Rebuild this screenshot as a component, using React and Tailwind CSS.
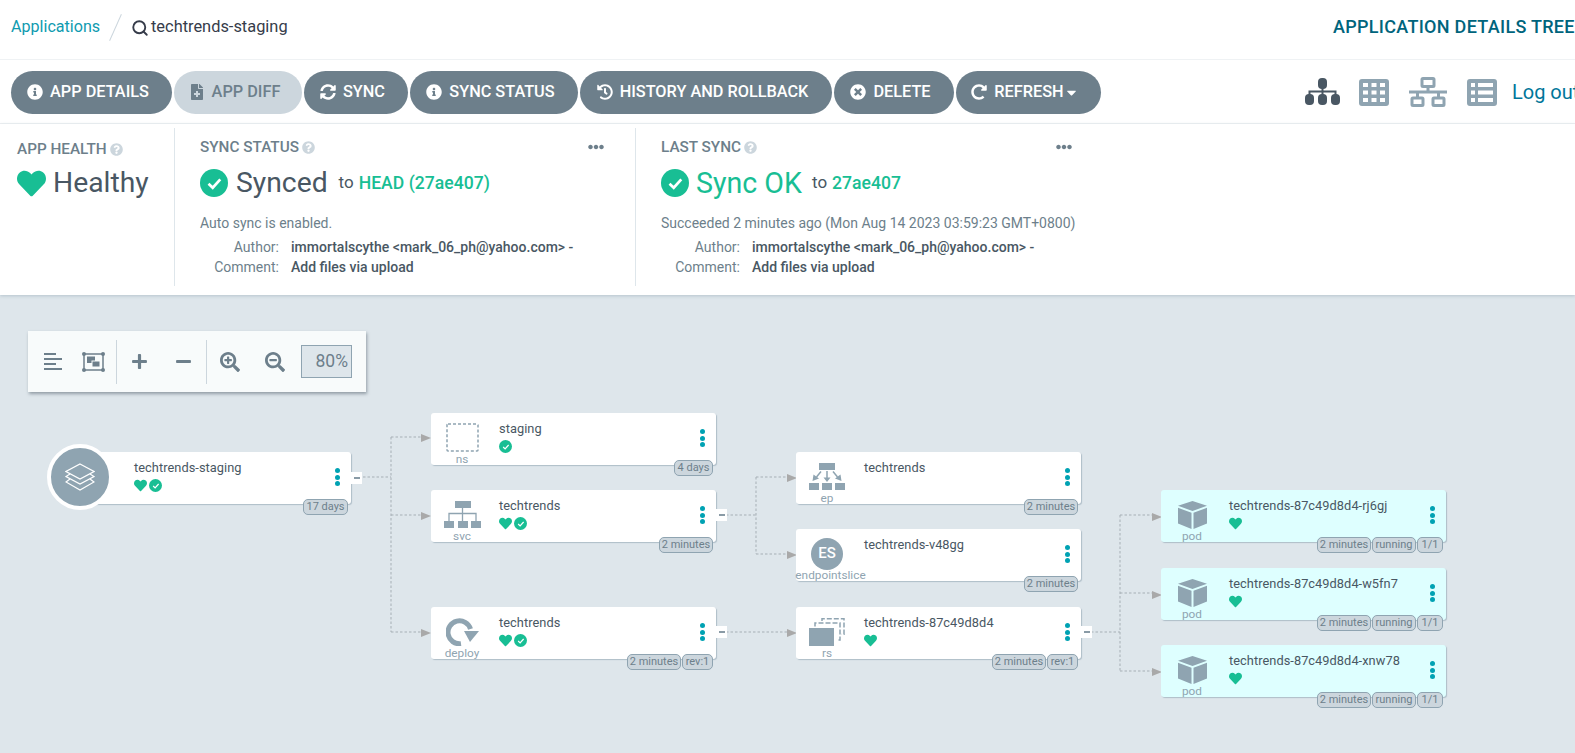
import React from "react";
import { FaInfoCircle, FaFileMedical, FaSyncAlt, FaHistory, FaTimesCircle, FaRedoAlt, FaCaretDown, FaHeart, FaQuestionCircle, FaEllipsisH, FaPlus, FaMinus, FaSearchPlus, FaSearchMinus } from "react-icons/fa";
import { Search } from "lucide-react";

const Btn = ({ icon: I, label, disabled, w, caret }) => (
  <div className={`${w} h-[43px] rounded-[22px] flex items-center justify-center gap-[7px] pr-[7px] text-[16.300px] font-medium whitespace-nowrap ${disabled ? "bg-[#ccd6dd] text-[#6d7f8b]" : "bg-[#6d7f8b] text-white"}`}>
    <I className="w-[16px] h-[16px] shrink-0" />
    <span className="flex items-center">{label}{caret && <FaCaretDown className="w-[15px] h-[15px]" />}</span>
  </div>
);

const Ok = ({ cls = "w-[13px] h-[13px]" }) => (
  <span className={`${cls} rounded-full bg-[#18be94] flex items-center justify-center shrink-0`}>
    <svg viewBox="0 0 10 10" className="w-[60%] h-[60%]"><path d="M1.5 5.2 L4 7.6 L8.5 2.6" fill="none" stroke="white" strokeWidth="1.6" /></svg>
  </span>
);

const Heart = ({ cls = "w-[13px] h-[13px]" }) => <FaHeart className={`${cls} text-[#18be94] shrink-0`} />;

const Meta = ({ w }) => (
  <div className="grid grid-cols-[auto_1fr] gap-x-[12px] text-[14px] leading-[20px] mt-[4px]">
    <span className={`${w} text-right text-[#6d7f8b]`}>Author:</span>
    <span className="font-medium text-[#495763] whitespace-nowrap">immortalscythe &lt;mark_06_ph@yahoo.com&gt; -</span>
    <span className={`${w} text-right text-[#6d7f8b]`}>Comment:</span>
    <span className="font-medium text-[#495763]">Add files via upload</span>
  </div>
);

const Title = ({ children }) => (
  <div className="flex items-center gap-[3px] text-[15.300px] font-medium text-[#6d7f8b] leading-[20px]">
    {children}
    <FaQuestionCircle className="w-[13px] h-[13px] text-[#ccd6dd]" />
  </div>
);

const C = "#8fa4b1";
const Svc = () => (
  <svg width="37" height="27" viewBox="0 0 37 27" fill={C}>
    <rect x="11" width="16" height="7" /><rect y="20" width="10" height="7" /><rect x="14" y="20" width="10" height="7" /><rect x="27" y="20" width="10" height="7" />
    <path d="M18.5 7v13M5 20v-7.500h27V20" fill="none" stroke={C} strokeWidth="1.300" />
  </svg>
);
const Ep = () => (
  <svg width="36" height="27" viewBox="0 0 36 27" fill={C}>
    <rect x="10" width="16" height="7" /><rect y="20" width="10" height="7" /><rect x="13" y="20" width="10" height="7" /><rect x="26" y="20" width="10" height="7" />
    <path d="M18 8v7M12 8.500 7.500 14M24 8.500 28.500 14" fill="none" stroke={C} strokeWidth="1.500" />
    <path d="M14.500 14.500h7L18 19zM4.500 11.500l5.500 4-6.500 2.500zM31.500 11.500l-5.500 4 6.500 2.500z" />
  </svg>
);
const Ns = () => (
  <svg width="33" height="29" viewBox="0 0 33 29"><rect x="1" y="1" width="31" height="27" rx="1" fill="none" stroke={C} strokeWidth="1.500" strokeDasharray="3 2" /></svg>
);
const Deploy = () => (
  <svg width="33" height="28" viewBox="0 0 33 28">
    <path d="M24.500 11A11.500 11.500 0 1 0 15 25.700" fill="none" stroke={C} strokeWidth="5" />
    <path d="M18 13h15l-9 11z" fill={C} />
  </svg>
);
const Rs = () => (
  <svg width="36" height="28" viewBox="0 0 36 28">
    <rect y="10" width="25" height="18" fill={C} />
    <path d="M6 8.500V5h25v17h-3M13 3V.8h22v15.500h-2.500" fill="none" stroke={C} strokeWidth="1.500" strokeDasharray="5 2" />
  </svg>
);
const Pod = () => (
  <svg width="29" height="28" viewBox="0 0 29 28" fill={C}>
    <path d="M14.500 0 29 4.800 14.500 10 0 4.800zM0 6.800l13.500 5V28L0 22.500zM29 6.800l-13.500 5V28L29 22.500z" />
  </svg>
);
const Es = () => (
  <span className="w-[32px] h-[32px] rounded-full bg-[#8fa4b1] text-white text-[15px] font-medium flex items-center justify-center">ES</span>
);

const Tag = ({ w, children }) => (
  <span className={`${w} h-[16px] rounded-[5px] border border-[#8fa4b1] bg-[#ccd6dd] text-[#6d7f8b] text-[11px] leading-[14px] text-center whitespace-nowrap`}>{children}</span>
);
const T2 = "w-[54px]";

const Node = ({ pos, name, kind, icon: I, heart, ok, tags, bg = "bg-white", labelCls = "" }) => (
  <div className={`absolute ${pos} w-[285px] h-[52px] rounded-[3px] ${bg} shadow-[1px_1px_1px_rgba(143,164,177,0.6)] flex`}>
    <div className="w-[62px] shrink-0 pt-[9px] flex flex-col items-center">
      <div className="h-[31px] flex items-center justify-center">{I && <I />}</div>
      <div className={`h-[12px] leading-[12px] text-[11.800px] text-[#8fa4b1] whitespace-nowrap ${labelCls}`}>{kind}</div>
    </div>
    <div className="ml-[6px] pt-[8px] flex-1 min-w-0">
      <div className="text-[12.800px] leading-[16px] tracking-[0.05px] text-[#495763] whitespace-nowrap">{name}</div>
      <div className="flex items-center gap-[2px] mt-[3px]">{heart && <Heart />}{ok && <Ok />}</div>
    </div>
    <div className="w-[28px] shrink-0 pt-[16px] flex flex-col items-center gap-[1.500px] h-fit">
      <i className="w-[5px] h-[5px] rounded-full bg-[#00a2b3]" /><i className="w-[5px] h-[5px] rounded-full bg-[#00a2b3]" /><i className="w-[5px] h-[5px] rounded-full bg-[#00a2b3]" />
    </div>
    <div className="absolute right-[3px] top-[47px] flex gap-[1px]">{tags}</div>
  </div>
);

const Collapse = ({ pos }) => (
  <div className={`absolute ${pos} w-[11px] h-[12px] bg-white flex items-center justify-center`}><i className="w-[6px] h-[2px] bg-[#8a9ba6]" /></div>
);

const Arrow = ({ x, y }) => <path d={`M${x} ${y - 4}L${x + 10} ${y}L${x} ${y + 4}z`} fill="#a9a9a9" />;

const Edges = () => (
  <svg className="absolute inset-0" width="1575" height="458" viewBox="0 295 1575 458">
    <path fill="none" stroke="#a6afb5" strokeWidth="1" strokeDasharray="2.500 2"
      d="M363 477H391M391 437V632M391 437H422M391 515H422M391 632H422M726 515H756M756 477V554M756 477H787M756 554H787M726 632H787M1091 632H1120M1120 515V671M1120 515H1152M1120 593H1152M1120 671H1152" />
    <Arrow x={421} y={438} /><Arrow x={421} y={516} /><Arrow x={421} y={633} />
    <Arrow x={787} y={478} /><Arrow x={787} y={555} /><Arrow x={787} y={633} />
    <Arrow x={1152} y={517} /><Arrow x={1152} y={595} /><Arrow x={1152} y={672} />
  </svg>
);

export default function App() {
  const running = (
    <>
      <Tag w={T2}>2 minutes</Tag><Tag w="w-[44px]">running</Tag><Tag w="w-[26px]">1/1</Tag>
    </>
  );
  return (
    <div className="w-[1575px] h-[753px] overflow-hidden bg-white font-[Roboto,sans-serif] flex flex-col">
      {/* header */}
      <div className="h-[60px] shrink-0 border-b border-[#eff2f4] flex items-center pl-[11px] pb-[4px] whitespace-nowrap overflow-hidden">
        <span className="text-[16.100px] text-[#0f9bb0] w-[104px]">Applications</span>
        <span className="w-[1px] h-[29px] bg-[#ccd6dd] rotate-[24deg] mr-[15px]" />
        <Search className="w-[18px] h-[18px] text-[#363c4a] mr-[2px]" strokeWidth={2.500} />
        <span className="text-[16.400px] text-[#363c4a]">techtrends-staging</span>
        <span className="ml-auto -mt-[2px] text-[18px] font-medium text-[#00647c] tracking-[0.3px] w-[242px] shrink-0">APPLICATION DETAILS TREE</span>
      </div>
      {/* toolbar */}
      <div className="h-[64px] shrink-0 border-b border-[#eff2f4] flex items-center pl-[11px] pt-[1px]">
        <div className="flex gap-[2px]">
          <Btn icon={FaInfoCircle} label="APP DETAILS" w="w-[161px]" />
          <Btn icon={FaFileMedical} label="APP DIFF" disabled w="w-[128px]" />
          <Btn icon={FaSyncAlt} label="SYNC" w="w-[104px]" />
          <Btn icon={FaInfoCircle} label="SYNC STATUS" w="w-[168px]" />
          <Btn icon={FaHistory} label="HISTORY AND ROLLBACK" w="w-[252px]" />
          <Btn icon={FaTimesCircle} label="DELETE" w="w-[120px]" />
          <Btn icon={FaRedoAlt} label="REFRESH" caret w="w-[145px]" />
        </div>
        <div className="ml-[204px] flex items-center">
          <svg width="35" height="28" viewBox="0 0 35 28" fill="#495763">
            <rect x="13" y="0" width="9" height="11" rx="4" /><rect x="0" y="16" width="9" height="11" rx="4" /><rect x="13" y="16" width="9" height="11" rx="4" /><rect x="26" y="16" width="9" height="11" rx="4" />
            <path d="M17.500 10V17M4.500 17V13.500H30.500V17" fill="none" stroke="#495763" strokeWidth="2" />
          </svg>
          <svg className="ml-[19px]" width="30" height="27" viewBox="0 0 30 27">
            <path fillRule="evenodd" fill={C} d="M3 0H27a3 3 0 0 1 3 3V24a3 3 0 0 1-3 3H3a3 3 0 0 1-3-3V3a3 3 0 0 1 3-3zM4 4v4h5V4zm8.500 0v4h5V4zM21 4v4h5V4zM4 11.500v4h5v-4zm8.500 0v4h5v-4zm8.500 0v4h5v-4zM4 19v4h5v-4zm8.500 0v4h5v-4zm8.500 0v4h5v-4z" />
          </svg>
          <svg className="ml-[20px]" width="38" height="30" viewBox="0 0 38 30" fill="none" stroke={C} strokeWidth="3">
            <rect x="13" y="1.500" width="12" height="8" rx="1" /><rect x="3" y="21" width="11" height="7.500" rx="1" /><rect x="24" y="21" width="11" height="7.500" rx="1" />
            <path d="M0 15H38M19 10V15M8.500 15V21M29.500 15V21" />
          </svg>
          <svg className="ml-[20px]" width="30" height="27" viewBox="0 0 30 27">
            <path fillRule="evenodd" fill={C} d="M3 0H27a3 3 0 0 1 3 3V24a3 3 0 0 1-3 3H3a3 3 0 0 1-3-3V3a3 3 0 0 1 3-3zM4 4v4h4V4zm7 0v4h15V4zM4 11.500v4h4v-4zm7 0v4h15v-4zM4 19v4h4v-4zm7 0v4h15v-4z" />
          </svg>
          <span className="ml-[15px] text-[20px] text-[#00769a] whitespace-nowrap">Log out</span>
        </div>
      </div>
      {/* status */}
      <div className="h-[171px] shrink-0 flex pt-[4px] pb-[9px] shadow-[0_1px_3px_rgba(143,164,177,0.5)] z-10 bg-white">
        <div className="w-[175px] shrink-0 border-r border-[#dee6eb] pl-[17px] pt-[11px]">
          <Title>APP HEALTH</Title>
          <div className="flex items-center gap-[7px] mt-[4px]">
            <Heart cls="w-[29px] h-[29px]" />
            <span className="text-[28.300px] leading-[40px] text-[#495763]">Healthy</span>
          </div>
        </div>
        <div className="w-[461px] shrink-0 border-r border-[#dee6eb] pl-[25px] pr-[31px] pt-[9px] relative">
          <div className="flex justify-between items-center"><Title>SYNC STATUS</Title><FaEllipsisH className="w-[16px] h-[16px] text-[#6d7f8b]" /></div>
          <div className="flex items-center mt-[6px] whitespace-nowrap">
            <Ok cls="w-[28px] h-[28px]" />
            <span className="ml-[8px] text-[28.300px] leading-[40px] text-[#495763]">Synced</span>
            <span className="ml-[11px] text-[17px] text-[#495763]">to</span>
            <span className="ml-[5px] text-[17.600px] font-medium text-[#18be94]">HEAD (27ae407)</span>
          </div>
          <div className="mt-[10px] text-[14px] leading-[20px] text-[#6d7f8b]">Auto sync is enabled.</div>
          <Meta w="w-[79px]" />
        </div>
        <div className="w-[439px] shrink-0 pl-[25px] pr-[3px] pt-[9px]">
          <div className="flex justify-between items-center"><Title>LAST SYNC</Title><FaEllipsisH className="w-[16px] h-[16px] text-[#6d7f8b]" /></div>
          <div className="flex items-center mt-[6px] whitespace-nowrap">
            <Ok cls="w-[28px] h-[28px]" />
            <span className="ml-[7px] text-[28.600px] leading-[40px] text-[#18be94]">Sync OK</span>
            <span className="ml-[10px] text-[17px] text-[#495763]">to</span>
            <span className="ml-[5px] text-[17.600px] font-medium text-[#18be94]">27ae407</span>
          </div>
          <div className="mt-[10px] text-[14px] leading-[20px] text-[#6d7f8b] whitespace-nowrap">Succeeded 2 minutes ago (Mon Aug 14 2023 03:59:23 GMT+0800)</div>
          <Meta w="w-[79px]" />
        </div>
      </div>
      {/* canvas */}
      <div className="relative flex-1 bg-[#dee6eb] overflow-hidden">
        <Edges />
        <div className="absolute left-[28px] top-[36px] w-[338px] h-[61px] bg-[#f8fbfb] shadow-[1px_2px_3px_rgba(73,87,99,0.5)] flex items-center pl-[5px] text-[#6d7f8b]">
          <div className="w-[40px] flex justify-center">
            <svg width="18" height="17" viewBox="0 0 18 17" fill="#6d7f8b"><rect width="12" height="2" /><rect y="5" width="18" height="2" /><rect y="10" width="12" height="2" /><rect y="15" width="18" height="2" /></svg>
          </div>
          <div className="w-[40px] flex justify-center">
            <svg width="23" height="20" viewBox="0 0 23 20" fill="#6d7f8b">
              <rect x="2" y="2" width="19" height="16" fill="none" stroke="#6d7f8b" strokeWidth="1.500" />
              <circle cx="2" cy="2" r="2" /><circle cx="21" cy="2" r="2" /><circle cx="2" cy="18" r="2" /><circle cx="21" cy="18" r="2" />
              <rect x="5" y="4.500" width="8" height="6.500" /><rect x="10" y="9" width="8" height="6" stroke="#f8fbfb" />
            </svg>
          </div>
          <i className="ml-[3px] w-[1px] h-[44px] bg-[#ccd6dd]" />
          <div className="w-[44px] flex justify-center"><FaPlus className="w-[17px] h-[17px]" /></div>
          <div className="w-[44px] flex justify-center"><FaMinus className="w-[17px] h-[17px]" /></div>
          <i className="ml-[1px] w-[1px] h-[44px] bg-[#ccd6dd]" />
          <div className="w-[45px] flex justify-center"><FaSearchPlus className="w-[20px] h-[20px]" /></div>
          <div className="w-[45px] flex justify-center"><FaSearchMinus className="w-[20px] h-[20px]" /></div>
          <div className="ml-[4px] w-[51px] h-[33px] border border-[#8fa4b1] bg-[#dee6eb] text-[17.500px] text-right leading-[31px] pr-[3px]">80%</div>
        </div>

        <Node pos="left-[66px] top-[157px]" name="techtrends-staging" heart ok tags={<Tag w="w-[45px]">17 days</Tag>} />
        <div className="absolute left-[47px] top-[149px] w-[66px] h-[66px] rounded-full bg-[#8fa4b1] border-[4px] border-white flex items-center justify-center">
          <svg width="30" height="28" viewBox="0 0 30 28" fill="none" stroke="white" strokeWidth="1.200">
            <path d="M15 1 29 8.500 15 16 1 8.500z" />
            <path d="M5 11 1 13.500 15 21 29 13.500 25 11" />
            <path d="M5 16 1 19 15 27 29 19 25 16" />
          </svg>
        </div>
        <Collapse pos="left-[351px] top-[177px]" />

        <Node pos="left-[431px] top-[118px]" name="staging" kind="ns" icon={Ns} ok tags={<Tag w="w-[39px]">4 days</Tag>} />
        <Node pos="left-[431px] top-[195px]" name="techtrends" kind="svc" icon={Svc} heart ok tags={<Tag w={T2}>2 minutes</Tag>} />
        <Collapse pos="left-[716px] top-[214px]" />
        <Node pos="left-[431px] top-[312px]" name="techtrends" kind="deploy" icon={Deploy} heart ok tags={<><Tag w={T2}>2 minutes</Tag><Tag w="w-[31px]">rev:1</Tag></>} />
        <Collapse pos="left-[716px] top-[331px]" />

        <Node pos="left-[796px] top-[157px]" name="techtrends" kind="ep" icon={Ep} tags={<Tag w={T2}>2 minutes</Tag>} />
        <Node pos="left-[796px] top-[234px]" name="techtrends-v48gg" kind="endpointslice" labelCls="ml-[7px]" icon={Es} tags={<Tag w={T2}>2 minutes</Tag>} />
        <Node pos="left-[796px] top-[312px]" name="techtrends-87c49d8d4" kind="rs" icon={Rs} heart tags={<><Tag w={T2}>2 minutes</Tag><Tag w="w-[31px]">rev:1</Tag></>} />
        <Collapse pos="left-[1081px] top-[331px]" />

        <Node pos="left-[1161px] top-[195px]" bg="bg-[#deffff]" name="techtrends-87c49d8d4-rj6gj" kind="pod" icon={Pod} heart tags={running} />
        <Node pos="left-[1161px] top-[273px]" bg="bg-[#deffff]" name="techtrends-87c49d8d4-w5fn7" kind="pod" icon={Pod} heart tags={running} />
        <Node pos="left-[1161px] top-[350px]" bg="bg-[#deffff]" name="techtrends-87c49d8d4-xnw78" kind="pod" icon={Pod} heart tags={running} />
      </div>
    </div>
  );
}
